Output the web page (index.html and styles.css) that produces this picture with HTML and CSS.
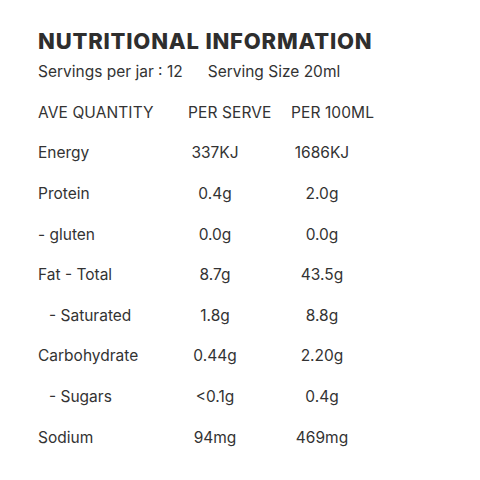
FILE: index.html
```html
<!DOCTYPE html>
<html>
<head>
	<title>Nutritional Information</title>
	<link rel="stylesheet" href="styles.css">
</head>
<body>
	<div class="panel">
		<h1 class="title">NUTRITIONAL INFORMATION</h1>
		<div class="servings">
			<span>Servings per jar : 12</span>
			<span>Serving Size 20ml</span>
		</div>

		<!-- the table itself: label, per serve, per 100ml -->
		<div class="table">
			<div class="head">AVE QUANTITY</div>
			<div class="head">PER SERVE</div>
			<div class="head">PER 100ML</div>

			<div class="label">Energy</div>
			<div class="serve">337KJ</div>
			<div class="hundred">1686KJ</div>

			<div class="label">Protein</div>
			<div class="serve">0.4g</div>
			<div class="hundred">2.0g</div>

			<div class="label">- gluten</div>
			<div class="serve">0.0g</div>
			<div class="hundred">0.0g</div>

			<div class="label">Fat - Total</div>
			<div class="serve">8.7g</div>
			<div class="hundred">43.5g</div>

			<div class="label sub">- Saturated</div>
			<div class="serve">1.8g</div>
			<div class="hundred">8.8g</div>

			<div class="label">Carbohydrate</div>
			<div class="serve">0.44g</div>
			<div class="hundred">2.20g</div>

			<div class="label sub">- Sugars</div>
			<div class="serve">&lt;0.1g</div>
			<div class="hundred">0.4g</div>

			<div class="label">Sodium</div>
			<div class="serve">94mg</div>
			<div class="hundred">469mg</div>
		</div>
	</div>
</body>
</html>
```

FILE: styles.css
```css
body {
	margin: 0;
	padding: 0;
	background-color: #fff;
	color: #333;
	font-family: Inter, "Noto Sans", sans-serif;
}

.panel {
	padding: 26px 0 0 38px;
}

.title {
	margin: 0;
	font-size: 22px;
	font-weight: 800;
	letter-spacing: 0.8px;
	color: #2e2e2e;
	line-height: 30px;
}

.servings {
	display: flex;
	gap: 25px;
	font-size: 15.5px;
	line-height: 20px;
	margin-top: 6px;
}

.table {
	display: grid;
	grid-template-columns: 150px 103px 1fr;
	grid-auto-rows: 40.6px;
	align-items: center;
	margin-top: 10px;
	font-size: 15.5px;
}

.head {
	letter-spacing: 0.1px;
}

.sub {
	padding-left: 11px;
}

/* value columns are centred under a fixed width */
.serve {
	width: 54px;
	text-align: center;
	white-space: nowrap;
}

.hundred {
	width: 62px;
	text-align: center;
	white-space: nowrap;
}
```
